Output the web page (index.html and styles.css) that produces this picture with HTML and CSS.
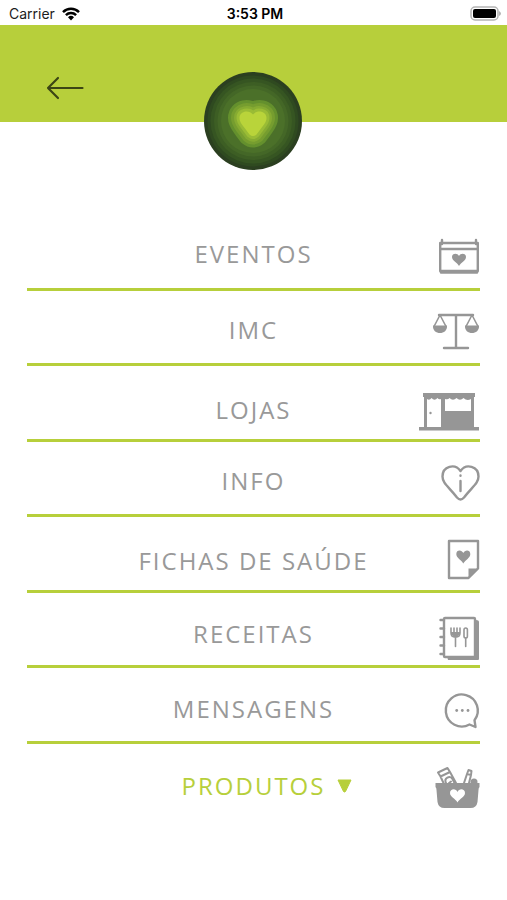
FILE: index.html
```html
<!DOCTYPE html>
<html lang="pt">
<head>
<meta charset="utf-8">
<meta name="viewport" content="width=device-width, initial-scale=1">
<title>Menu</title>
<link rel="stylesheet" href="styles.css">
</head>
<body>
<div class="status">
  <div class="status-left">
    <span>Carrier</span>
    <svg class="wifi" width="18" height="14" viewBox="0 0 18 14" aria-hidden="true">
      <g fill="none" stroke="#000" stroke-width="2.5"><path d="M1 5.1a11.5 11.5 0 0 1 16 0"/><path d="M3.9 8.1a7.3 7.3 0 0 1 10.2 0"/></g>
      <path d="M6 10.3a4.3 4.3 0 0 1 6 0L9 13.5z"/>
    </svg>
  </div>
  <span class="clock">3:53 PM</span>
  <svg class="battery" width="31" height="15" viewBox="0 0 31 15" aria-hidden="true">
    <rect x="1" y="1" width="27" height="13" rx="4" fill="#fff" stroke="#b4b4b4" stroke-width="1.5"/>
    <rect x="3" y="3" width="23" height="9" rx="2"/>
    <path d="M29 5q2 1 2 2.500t-2 2.500z" fill="#b4b4b4"/>
  </svg>
</div>
<header class="header">
  <button class="back" type="button" aria-label="Voltar">
    <svg width="38" height="24" viewBox="0 0 38 24"><path d="M36.500 12H2M12 2 2 12l10 10" fill="none" stroke="#3c4614" stroke-width="2.200" stroke-linecap="round" stroke-linejoin="round"/></svg>
  </button>
  <svg class="logo" width="98" height="98" viewBox="0 0 98 98" aria-hidden="true">
    <circle cx="49" cy="49" r="49" fill="#2b3f20"/>
    <circle cx="49" cy="49" r="45.500" fill="#2f4a20"/>
    <circle cx="49" cy="49" r="42.500" fill="#365522"/>
    <circle cx="49" cy="49" r="39" fill="#3d5e24"/>
    <circle cx="49" cy="49" r="35.500" fill="#446727"/>
    <circle cx="49" cy="49" r="32" fill="#4b7029"/>
    <defs><path id="core" d="M49 42.500C45 37.500 35.500 39 35.500 46c0 4 3 7 5.500 10.500l4.500 6q3.500 3 7 0l4.500-6c2.500-3.500 5.500-6.500 5.500-10.500C62.500 39 53 37.500 49 42.500z" stroke-linejoin="round"/></defs>
    <use href="#core" fill="#64902d" stroke="#64902d" stroke-width="23"/>
    <use href="#core" fill="#769d2f" stroke="#769d2f" stroke-width="17"/>
    <use href="#core" fill="#86ab32" stroke="#86ab32" stroke-width="11"/>
    <use href="#core" fill="#9abc35" stroke="#9abc35" stroke-width="6"/>
    <use href="#core" fill="#b9d43a"/>
  </svg>
</header>
<nav class="menu" aria-label="Menu principal">
  <a class="row" href="#eventos"><span class="label">EVENTOS</span>
    <svg class="icon" viewBox="0 0 64 48" aria-hidden="true">
      <path class="line" d="M24.200 13h37.600v28H24.200zM24.200 19h37.600M26 10v4M60 10v4"/>
      <path class="line" d="M25 42.500h36"/>
      <path d="M43 36c-2-3.500-7-5.500-7-9 0-4 5.500-4 7-1 1.500-3 7-3 7 1 0 3.500-5 5.500-7 9z"/>
    </svg></a>
  <a class="row" href="#imc"><span class="label">IMC</span>
    <svg class="icon" viewBox="0 0 64 48" aria-hidden="true">
      <path class="line" d="M23 9h34M40 9v33M28 42h24"/>
      <path class="thin" d="M24 9l-6 11.500M24 9l6 11.500M56 9l-6 11.500M56 9l6 11.500"/>
      <path d="M17 19.500h14c1 10-15 10-14 0zM49 19.500h14c1 10-15 10-14 0z"/>
    </svg></a>
  <a class="row low" href="#lojas"><span class="label">LOJAS</span>
    <svg class="icon" viewBox="0 0 64 48" aria-hidden="true">
      <path d="M7 7h52v4h-1v30H8V11H7zM3 41h60v3.500H3z"/>
      <path fill="#fff" d="M11 13q2.500 2 4.500-1 3 3.500 6 0 1.500 2 3.500 1v28H11zM29 13q3 1 4.500-1 3.500 3.500 7 0 3.500 3.500 7 0 3.500 3.500 7.500 1v12H29z"/>
      <circle cx="14.500" cy="27" r="1.200"/>
    </svg></a>
  <a class="row" href="#info"><span class="label">INFO</span>
    <svg class="icon" viewBox="0 0 64 48" aria-hidden="true">
      <path class="line" d="M44.500 14C39 6 26.500 9 26.500 19.500c0 7 6.500 10.500 14.500 21q3.500 4 7 0c8-10.500 14.500-14 14.500-21C62.500 9 50 6 44.500 14z"/>
      <path class="line" d="M44.500 24v10M44.500 18.500v.2"/>
    </svg></a>
  <a class="row low" href="#fichas"><span class="label">FICHAS DE SAÚDE</span>
    <svg class="icon" viewBox="0 0 64 48" aria-hidden="true">
      <path class="line" d="M33 4h29v27.500L52.500 41H33z"/>
      <path d="M52.500 41V31.500H62z"/>
      <path d="M47.300 26.500c-2-3.500-7-5.500-7-9.500 0-4.500 5.500-4.500 7-1 1.500-3.500 7-3.500 7 1 0 4-5 6-7 9.500z"/>
    </svg></a>
  <a class="row mid" href="#receitas"><span class="label">RECEITAS</span>
    <svg class="icon" viewBox="0 0 64 48" aria-hidden="true">
      <path d="M32 50h30q1 0 1-1V12q0-2-3-2V46H31z"/>
      <rect class="line paper" x="28" y="8" width="31" height="39" rx="1"/>
      <path class="line" d="M24.500 10H28M24.500 18.500H28M24.500 27H28M24.500 35.500H28M24.500 44H28"/>
      <path class="thin" d="M35 18v5c0 5.500 9 5.500 9 0v-5M38 18v6M41 18v6M39.500 26v10.500M49.700 28v8.500"/>
      <rect class="thin" x="48" y="18" width="3.400" height="10" rx="1.700"/>
      <path d="M35 22h9v2q-4.500 5-9 0z"/>
    </svg></a>
  <a class="row mid" href="#mensagens"><span class="label">MENSAGENS</span>
    <svg class="icon" viewBox="0 0 64 48" aria-hidden="true">
      <path class="line" d="M53.500 39.500A16 16 0 1 1 58.500 35.200L59.500 42z"/>
      <circle cx="40.700" cy="25.500" r="1.400"/><circle cx="46.300" cy="25.500" r="1.400"/><circle cx="52" cy="25.500" r="1.400"/>
    </svg></a>
  <button class="row mid open" type="button"><span class="label">PRODUTOS</span>
    <svg class="caret" width="15" height="14" viewBox="0 0 15 14" aria-hidden="true"><path d="M1 1h13L8.500 12.500q-1 1-2 0z" fill="#b7cf3b" stroke="#b7cf3b" stroke-linejoin="round"/></svg>
    <svg class="icon" viewBox="0 0 64 48" aria-hidden="true">
      <path class="thin bold" d="M22 10.500 31.500 6l2.500 4-9.500 4.500zM24.500 14.500 27.500 21M34 10l6 11M30 21c-2.500-5 4-8 6.500-4l2 4M33 21l2-1.500M48 21l3-9 4 1-2 8M51 12l1.500-4 3 1-.5 4"/>
      <circle cx="58" cy="20" r="3.500"/>
      <path d="M19.500 21h44v4q-1 1-1 3l-1 12q-1 6-7 6h-26q-6 0-7-6l-1-12q0-2-1-3z"/>
      <path fill="#fff" d="M41.500 40.500c-2-4-7.500-5.500-7.500-9.500 0-4.500 6-5 7.500-1 1.500-4 7.500-3.500 7.500 1 0 4-5.500 5.500-7.500 9.500z"/>
    </svg></button>
</nav>
</body>
</html>
```
FILE: styles.css
```css
* { box-sizing: border-box; }
body {
  margin: 0;
  min-height: 100vh;
  display: flex;
  flex-direction: column;
  background: #fff;
  font-family: "Open Sans", "Noto Sans", sans-serif;
}
button { border: 0; padding: 0; background: none; font: inherit; cursor: pointer; }
svg { display: block; }

.status {
  display: grid;
  grid-template-columns: 1fr auto 1fr;
  align-items: center;
  height: 25px;
  padding: 2px 6px 0 9px;
  font: 14px/20px Inter, "Liberation Sans", sans-serif;
  color: #1c1c1c;
}
.status-left { display: flex; align-items: center; gap: 7px; }
.clock { font-weight: 600; color: #000; }
.battery { justify-self: end; }

.header {
  position: relative;
  height: 97px;
  background: #b7cf3b;
}
.back { margin: 51px 0 0 46px; }
.logo { position: absolute; left: calc(50% - 50px); bottom: -48px; }

.menu {
  flex: 1;
  display: flex;
  flex-direction: column;
  padding: 93px 27px 81px;
}
.row {
  flex: 1 0 72px;
  display: grid;
  grid-template-columns: 1fr auto 1fr;
  align-items: center;
  padding-top: 6px;
  border-bottom: 3px solid #b7cf3b;
  color: #999;
  font-size: 24px;
  line-height: 32px;
  letter-spacing: 2px;
  text-decoration: none;
}
.row.mid { padding-top: 10px; }
.row.low { padding-top: 16px; }
.row.open { padding-top: 12px; border-bottom-color: transparent; color: #b7cf3b; }
.label { grid-column: 2; font-weight: 400; }
.caret { grid-area: 1 / 3; margin-left: 12px; }
.icon {
  grid-area: 1 / 3;
  justify-self: end;
  width: 64px;
  height: 48px;
  margin: -4px 0;
  overflow: visible;
  fill: #969696;
}
.line, .thin {
  fill: none;
  stroke: #969696;
  stroke-width: 2.4px;
  stroke-linecap: round;
  stroke-linejoin: round;
}
.thin { stroke-width: 1.6px; }
.thin.bold { stroke-width: 2px; }
.paper { fill: #fff; }
```
